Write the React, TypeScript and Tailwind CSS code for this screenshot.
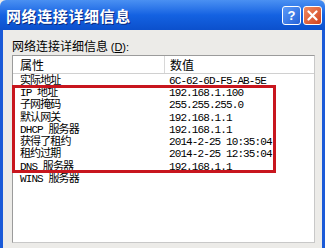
import React from "react";

const rows: [string, string][] = [
  ["实际地址", "6C-62-6D-F5-AB-5E"],
  ["IP 地址", "192.168.1.100"],
  ["子网掩码", "255.255.255.0"],
  ["默认网关", "192.168.1.1"],
  ["DHCP 服务器", "192.168.1.1"],
  ["获得了租约", "2014-2-25 10:35:04"],
  ["租约过期", "2014-2-25 12:35:04"],
  ["DNS 服务器", "192.168.1.1"],
  ["WINS 服务器", ""],
];

const cell = "font-['Liberation_Mono','Noto_Sans_CJK_SC',monospace] text-[11px] tracking-[-0.9px] text-black leading-none";

export default function App() {
  return (
    <div className="relative w-[325px] h-[248px] overflow-hidden flex flex-col font-['Noto_Sans_CJK_SC',sans-serif] bg-[#ecebe8]">
      {/* Title bar */}
      <div className="h-[30px] shrink-0 flex items-center justify-between pl-[6px] pr-[3px] bg-gradient-to-b from-[#4a90f2] via-[#1462e2] to-[#0c50cc] rounded-t-[6px]">
        <span className="text-white font-bold text-[15px] tracking-[0.6px] leading-none [text-shadow:1px_1px_0_#0a2a80]">网络连接详细信息</span>
        <div className="flex gap-[2px] items-center">
          <div className="w-[19px] h-[19px] rounded-[3px] border border-white bg-gradient-to-br from-[#5c9af8] to-[#2461d8] flex items-center justify-center text-white font-bold text-[13px] leading-none font-['Liberation_Sans',sans-serif]">?</div>
          <div className="w-[19px] h-[19px] rounded-[3px] border border-white bg-gradient-to-br from-[#f08a60] to-[#d0401c] flex items-center justify-center">
            <svg width="11" height="11" viewBox="0 0 11 11">
              <path d="M1.5 1.5 L9.5 9.5 M9.5 1.5 L1.5 9.5" stroke="white" strokeWidth="2.2" strokeLinecap="round" />
            </svg>
          </div>
        </div>
      </div>

      {/* Body */}
      <div className="flex-1 flex flex-col border-l-[3px] border-r-[3px] border-[#1a5ad8] pl-[9px] pr-[7px] pt-[9px]">
        <div className="text-[12px] leading-[14px] text-black h-[15px]">
          网络连接详细信息 <span className="font-['Liberation_Sans',sans-serif] text-[11px]">(<span className="underline">D</span>):</span>
        </div>
        <div className="mt-[1px] flex-1 mb-[5px] bg-white border border-[#9b9b9b] border-r-[#c8c8c8] border-b-[#c8c8c8] flex flex-col">
          <div className="h-[18px] shrink-0 flex items-center border-b border-[#d0d0d0] text-[12px] text-black">
            <div className="w-[152px] pl-[7px] h-full flex items-center border-r border-[#d8d8d8]">属性</div>
            <div className="pl-[5px]">数值</div>
          </div>
          <div className="h-[1px] shrink-0" />
          {rows.map(([k, v]) => (
            <div key={k} className="h-[12.3px] flex items-center">
              <div className={`w-[152px] pl-[7px] ${cell}`}>{k}</div>
              <div className={`pl-[4px] ${cell}`}>{v}</div>
            </div>
          ))}
        </div>
      </div>

      {/* Red annotation frame */}
      <div className="absolute left-[12px] top-[85px] w-[264px] h-[88px] border-[3px] border-[#c8161e]" />
    </div>
  );
}
